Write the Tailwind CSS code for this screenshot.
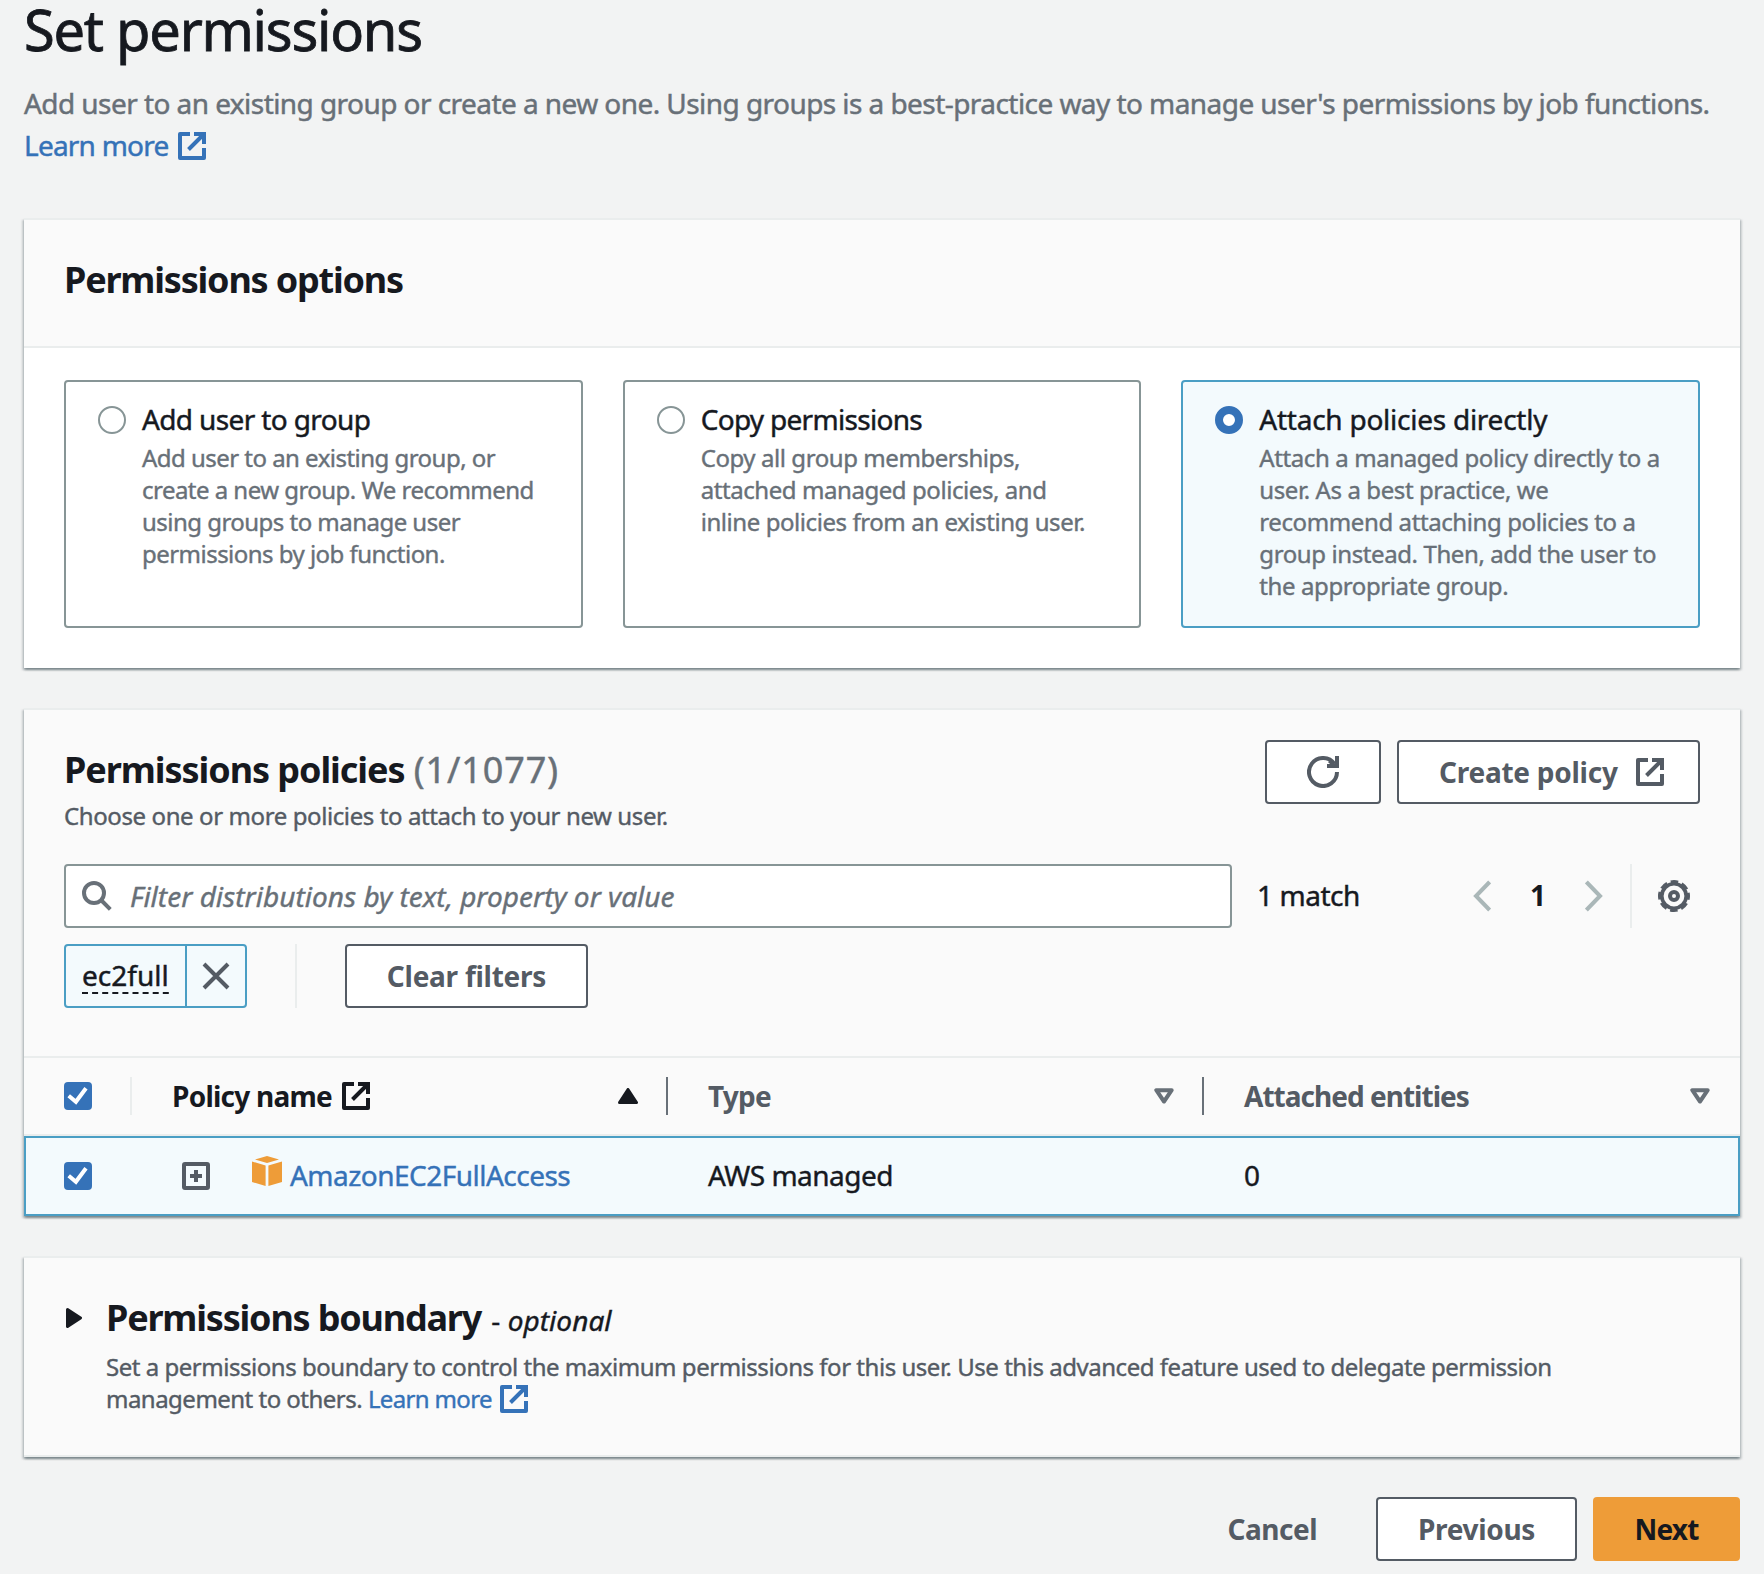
<!DOCTYPE html>
<html lang="en">
<head>
<meta charset="utf-8">
<title>Set permissions</title>
<script src="https://cdn.jsdelivr.net/npm/@tailwindcss/browser@4"></script>
</head>
<body class="h-[1574px] bg-[#f2f3f3] px-6 font-['Noto_Sans','Open_Sans',sans-serif] text-[28px] leading-7 text-[#16191f] whitespace-nowrap">

<svg class="hidden">
  <symbol id="external" viewBox="0 0 28 28"><g fill="none" stroke="currentColor" stroke-width="4" stroke-linejoin="round"><path d="M12 2H2v24h24V16"/><path stroke-linejoin="miter" d="M16 2h10v10M26 2 10.5 17.5"/></g></symbol>
  <symbol id="check" viewBox="0 0 28 28"><path d="m4.7 13.8 7.2 6L22 6.2" fill="none" stroke="#fff" stroke-width="4"/></symbol>
  <symbol id="sort" viewBox="0 0 20 16"><path d="M2.3 2.2h15.4L10 13.5z" fill="none" stroke="currentColor" stroke-width="4" stroke-linejoin="round"/></symbol>
</svg>

<h1 class="text-[56px] leading-[58px] tracking-[-1.25px] [-webkit-text-stroke:0.8px]">Set permissions</h1>
<p class="mt-6 leading-[42px] tracking-[-0.56px] text-[#687078] [-webkit-text-stroke:0.45px]">Add user to an existing group or create a new one. Using groups is a best-practice way to manage user's permissions by job functions.<br><a class="tracking-[-0.78px] text-[#3572b8]">Learn more <svg class="ml-[3px] inline-block size-7 align-[-4px]"><use href="#external"/></svg></a></p>

<section class="mt-[52px] border-t-2 border-[#eaeded] bg-white shadow-[0_2px_2px_rgba(0,28,36,0.3),2px_2px_2px_rgba(0,28,36,0.15),-2px_2px_2px_rgba(0,28,36,0.15)]">
  <div class="h-32 border-b-2 border-[#eaeded] bg-[#fafafa] px-10 pt-[38px]">
    <h2 class="text-4xl leading-11 font-bold tracking-[-1.2px]">Permissions options</h2>
  </div>
  <div class="grid h-80 grid-cols-3 gap-10 px-10 pt-8 pb-10">
    <label class="flex gap-4 rounded-[4px] border-2 border-[#879596] px-8 pt-6">
      <span class="size-7 shrink-0 rounded-full border-2 border-[#879596] bg-white"></span>
      <span>
        <span class="block leading-[26px] tracking-[-0.63px] [-webkit-text-stroke:0.45px]">Add user to group</span>
        <span class="mt-[10px] block text-2xl leading-8 tracking-[-0.53px] text-[#687078] [-webkit-text-stroke:0.4px]">Add user to an existing group, or<br>create a new group. We recommend<br>using groups to manage user<br>permissions by job function.</span>
      </span>
    </label>
    <label class="flex gap-4 rounded-[4px] border-2 border-[#879596] px-8 pt-6">
      <span class="size-7 shrink-0 rounded-full border-2 border-[#879596] bg-white"></span>
      <span>
        <span class="block leading-[26px] tracking-[-0.7px] [-webkit-text-stroke:0.45px]">Copy permissions</span>
        <span class="mt-[10px] block text-2xl leading-8 tracking-[-0.43px] text-[#687078] [-webkit-text-stroke:0.4px]">Copy all group memberships,<br>attached managed policies, and<br>inline policies from an existing user.</span>
      </span>
    </label>
    <label class="flex gap-4 rounded-[4px] border-2 border-[#4a9ec4] bg-[#f3fafd] px-8 pt-6">
      <span class="size-7 shrink-0 rounded-full border-8 border-[#3572b8] bg-white"></span>
      <span>
        <span class="block leading-[26px] tracking-[-0.25px] [-webkit-text-stroke:0.45px]">Attach policies directly</span>
        <span class="mt-[10px] block text-2xl leading-8 tracking-[-0.4px] text-[#687078] [-webkit-text-stroke:0.4px]">Attach a managed policy directly to a<br>user. As a best practice, we<br>recommend attaching policies to a<br>group instead. Then, add the user to<br>the appropriate group.</span>
      </span>
    </label>
  </div>
</section>

<section class="mt-10 border-t-2 border-[#eaeded] bg-[#fafafa] shadow-[0_2px_2px_rgba(0,28,36,0.3),2px_2px_2px_rgba(0,28,36,0.15),-2px_2px_2px_rgba(0,28,36,0.15)]">
  <div class="h-[346px] px-10 pt-[30px]">
    <div class="flex h-[92px] items-start justify-between">
      <div class="pt-2">
        <h2 class="text-4xl leading-11 font-bold tracking-[-1.06px]">Permissions policies <span class="ml-px font-normal tracking-[0.9px] text-[#687078] [-webkit-text-stroke:0.45px]">(1/1077)</span></h2>
        <p class="mt-2 text-2xl leading-8 tracking-[-0.4px] text-[#545b64] [-webkit-text-stroke:0.4px]">Choose one or more policies to attach to your new user.</p>
      </div>
      <div class="flex gap-4 text-[#545b64]">
        <button class="flex h-16 w-[116px] items-center justify-center rounded-[4px] border-2 border-[#545b64] bg-white">
          <svg class="size-8" viewBox="0 0 32 32" fill="none" stroke="currentColor" stroke-width="4"><path d="M30 16A14 14 0 1 1 27.5 8"/><path d="M30 0v10H20"/><path d="m22 5 6 5" stroke-width="3"/></svg>
        </button>
        <button class="flex h-16 w-[303px] items-center gap-[18px] rounded-[4px] border-2 border-[#545b64] bg-white pl-10 font-bold tracking-[-0.25px]">Create policy<svg class="size-7"><use href="#external"/></svg></button>
      </div>
    </div>
    <div class="mt-8 flex h-16 items-center">
      <div class="flex h-16 w-[1168px] items-center gap-[18px] rounded-[4px] border-2 border-[#879596] bg-white pl-4 text-[#687078]">
        <svg class="size-[30px]" viewBox="0 0 30 30" fill="none" stroke="currentColor" stroke-width="4"><circle cx="12" cy="12" r="10"/><path d="m19 19 9.3 9.3"/></svg>
        <span class="tracking-[0.02px] italic [-webkit-text-stroke:0.4px]">Filter distributions by text, property or value</span>
      </div>
      <span class="ml-[25px] pb-[2px] tracking-[-0.45px] [-webkit-text-stroke:0.45px]">1 match</span>
      <div class="ml-auto flex h-16 items-center">
        <svg class="h-8 w-[18px] text-[#aab7b8]" viewBox="0 0 18 32" fill="none" stroke="currentColor" stroke-width="4"><path d="M16.6 2 3 16l13.6 14"/></svg>
        <span class="w-[94px] pb-[2px] text-center font-bold">1</span>
        <svg class="h-8 w-[18px] text-[#aab7b8]" viewBox="0 0 18 32" fill="none" stroke="currentColor" stroke-width="4"><path d="M1.4 2 15 16 1.4 30"/></svg>
        <span class="ml-[27px] h-16 w-[2px] bg-[#eaeded]"></span>
        <svg class="mr-[10px] ml-[26px] size-8 text-[#545b64]" viewBox="0 0 32 32" fill="none" stroke="currentColor" stroke-width="4"><circle cx="16" cy="16" r="12.2" stroke-width="3.6"/><circle cx="16" cy="16" r="14.2" stroke-width="3.6" stroke-dasharray="7.4 3.753" stroke-dashoffset="3.7"/><circle cx="16" cy="16" r="4"/></svg>
      </div>
    </div>
    <div class="mt-4 flex h-16">
      <div class="flex w-[183px] rounded-[4px] border-2 border-[#4a9ec4] bg-[#f3fafd]">
        <div class="flex w-[121px] flex-col border-r-2 border-[#4a9ec4] pt-[15px] pl-4">
          <span class="[-webkit-text-stroke:0.45px]">ec2full</span>
          <svg class="mt-[3px] h-[2px] w-[87px]"><path d="M0 1h87" stroke="#16191f" stroke-width="2" stroke-dasharray="6 4.1"/></svg>
        </div>
        <svg class="mt-4 ml-[15px] size-7 text-[#545b64]" viewBox="0 0 28 28" stroke="currentColor" stroke-width="4"><path d="m2 2 24 24M26 2 2 26"/></svg>
      </div>
      <span class="ml-12 w-[2px] bg-[#eaeded]"></span>
      <button class="ml-12 w-[243px] rounded-[4px] border-2 border-[#545b64] bg-white font-bold tracking-[-0.25px] text-[#545b64]">Clear filters</button>
    </div>
  </div>

  <div class="grid h-20 grid-cols-[644px_536px_536px] items-center border-y-2 border-[#eaeded] font-bold tracking-[-0.98px] text-[#545b64]">
    <div class="flex h-[38px] items-center border-r-2 border-[#687078] pr-7 pl-10 text-[#16191f]">
      <svg class="size-7 rounded-[4px] bg-[#3572b8]"><use href="#check"/></svg>
      <span class="ml-[38px] h-[38px] w-[2px] bg-[#eaeded]"></span>
      <span class="ml-10 tracking-[-0.75px]">Policy name</span>
      <svg class="ml-[10px] size-7"><use href="#external"/></svg>
      <svg class="ml-auto h-4 w-5" viewBox="0 0 20 16"><path d="M10 1.5 18.5 14.5H1.5z" fill="currentColor" stroke="currentColor" stroke-width="3" stroke-linejoin="round"/></svg>
    </div>
    <div class="flex h-[38px] items-center justify-between border-r-2 border-[#687078] pr-7 pl-10">
      <span class="tracking-[-0.8px]">Type</span><svg class="h-4 w-5 text-[#687078]"><use href="#sort"/></svg>
    </div>
    <div class="flex h-[38px] items-center justify-between pr-[30px] pl-10">
      <span>Attached entities</span><svg class="h-4 w-5 text-[#687078]"><use href="#sort"/></svg>
    </div>
  </div>
  <div class="grid h-20 grid-cols-[642px_536px_534px] items-center border-2 border-[#4a9ec4] bg-[#f3fafd] tracking-[-0.52px] [-webkit-text-stroke:0.4px]">
    <div class="flex items-center pl-[38px]">
      <svg class="size-7 rounded-[4px] bg-[#3572b8]"><use href="#check"/></svg>
      <svg class="ml-[90px] size-7 text-[#545b64]" viewBox="0 0 28 28" fill="none" stroke="currentColor" stroke-width="4"><rect x="2" y="2" width="24" height="24" rx="1"/><path d="M14 8v12M8 14h12"/></svg>
      <svg class="-mt-2.5 ml-[42px] size-[30px]" viewBox="0 0 30 30" fill="#ee9c38"><path d="M3 3.5 15 0l12 3.5L15 7zM0 5.5l13.6 4V30L0 26zM30 5.5l-13.6 4V30L30 26z"/></svg>
      <a class="ml-2 pb-[2px] text-[#3572b8]">AmazonEC2FullAccess</a>
    </div>
    <div class="pb-[2px] pl-10">AWS managed</div>
    <div class="pb-[2px] pl-10">0</div>
  </div>
</section>

<section class="mt-10 flex h-[201px] border-y-2 border-[#eaeded] bg-[#fafafa] pt-[38px] pl-[42px] shadow-[0_2px_2px_rgba(0,28,36,0.3),2px_2px_2px_rgba(0,28,36,0.15),-2px_2px_2px_rgba(0,28,36,0.15)]">
  <svg class="mt-3 h-5 w-4" viewBox="0 0 16 20"><path d="M1.5 1.5 14.5 10l-13 8.5z" fill="currentColor" stroke="currentColor" stroke-width="3" stroke-linejoin="round"/></svg>
  <div class="ml-6">
    <h2 class="h-11 text-4xl leading-11 font-bold tracking-[-1.2px]">Permissions boundary <span class="ml-[2px] text-[28px] font-normal tracking-[0.05px] [-webkit-text-stroke:0.4px]">- <i>optional</i></span></h2>
    <p class="mt-[11px] text-2xl leading-8 tracking-[-0.47px] text-[#545b64] [-webkit-text-stroke:0.4px]">Set a permissions boundary to control the maximum permissions for this user. Use this advanced feature used to delegate permission<br><span class="tracking-[-0.52px]">management to others.</span> <a class="tracking-[-0.65px] text-[#3572b8]">Learn more <svg class="ml-[3px] inline-block size-7 align-[-5px]"><use href="#external"/></svg></a></p>
  </div>
</section>

<footer class="mt-10 flex h-16 items-center justify-end font-bold text-[#545b64]">
  <button class="mr-[59px] tracking-[-0.5px]">Cancel</button>
  <button class="h-16 w-[201px] rounded-[4px] border-2 border-[#545b64] bg-white tracking-[-0.3px]">Previous</button>
  <button class="ml-4 h-16 w-[147px] rounded-[4px] bg-[#ee9c38] tracking-[-0.8px] text-[#16191f]">Next</button>
</footer>
</body>
</html>
